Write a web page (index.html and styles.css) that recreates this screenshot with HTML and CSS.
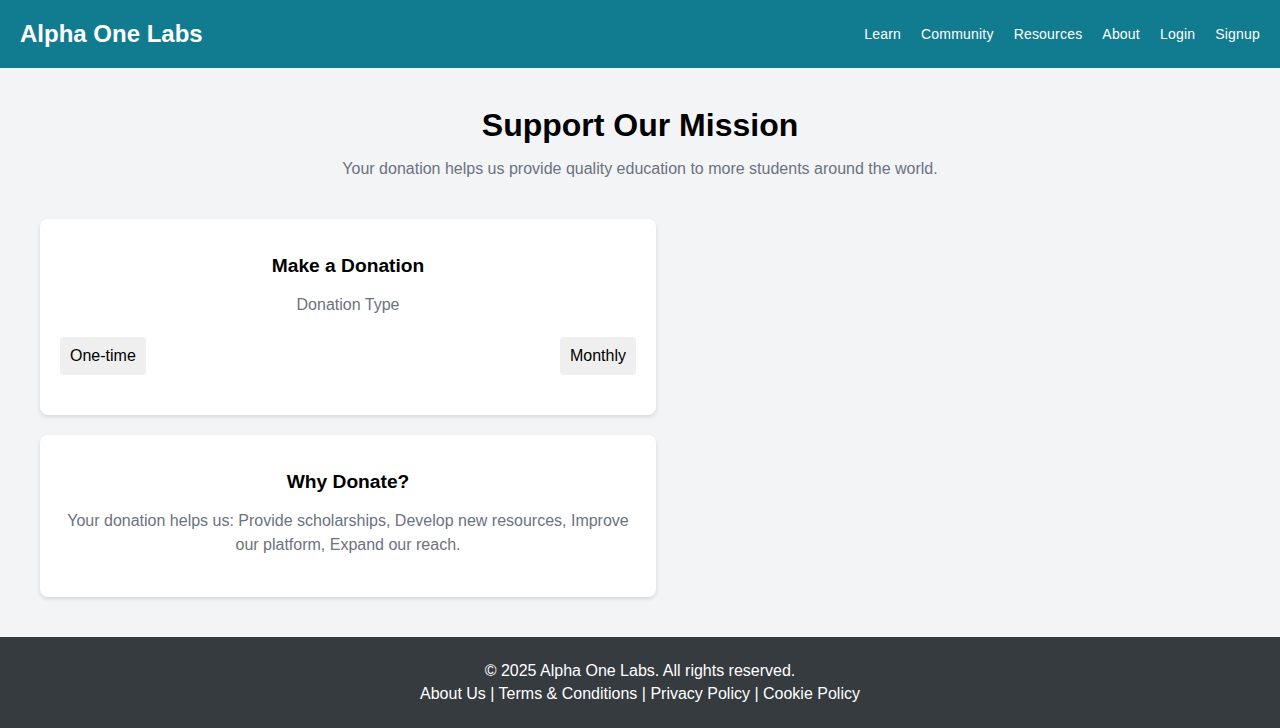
FILE: index.html
```html
<!DOCTYPE html>
<html lang="en">
<head>
<meta charset="utf-8">
<title>Support Our Mission - Alpha One Labs</title>
<link rel="stylesheet" href="styles.css">
</head>
<body>
<header class="site-header">
  <div class="logo">Alpha One Labs</div>
  <nav class="nav">
    <a href="#">Learn</a>
    <a href="#">Community</a>
    <a href="#">Resources</a>
    <a href="#">About</a>
    <a href="#">Login</a>
    <a href="#">Signup</a>
  </nav>
</header>
<main class="main">
  <section class="hero">
    <h1 class="hero-title">Support Our Mission</h1>
    <p class="hero-sub">Your donation helps us provide quality education to more students around the world.</p>
  </section>
  <div class="cards">
    <div class="card">
      <h3 class="card-title">Make a Donation</h3>
      <p class="card-label">Donation Type</p>
      <div class="type-row">
        <button class="type-btn">One-time</button>
        <button class="type-btn">Monthly</button>
      </div>
    </div>
    <div class="card">
      <h3 class="card-title">Why Donate?</h3>
      <p class="card-text">Your donation helps us: Provide scholarships, Develop new resources, Improve our platform, Expand our reach.</p>
    </div>
  </div>
</main>
<footer class="site-footer">
  <p class="footer-line">© 2025 Alpha One Labs. All rights reserved.</p>
  <p class="footer-line">About Us | Terms &amp; Conditions | Privacy Policy | Cookie Policy</p>
</footer>
</body>
</html>
```

FILE: styles.css
```css
* { box-sizing: border-box; }
html, body { margin: 0; padding: 0; }
body {
  font-family: "Liberation Sans", Arial, sans-serif;
  background: #f3f4f6;
  color: #000;
  font-size: 16px;
}
.site-header {
  height: 68px;
  background: #117c8f;
  display: flex;
  align-items: center;
  justify-content: space-between;
  padding: 0 20px;
}
.logo {
  color: #fff;
  font-weight: bold;
  font-size: 24px;
}
.nav {
  display: flex;
  gap: 20px;
}
.nav a {
  color: #fff;
  text-decoration: none;
  font-size: 14px;
  letter-spacing: 0.2px;
}
.main {
  padding: 40px;
}
.hero {
  text-align: center;
  margin-bottom: 38px;
}
.hero-title {
  margin: 0 0 14px;
  font-size: 32px;
  line-height: 1.1;
  font-weight: bold;
}
.hero-sub {
  margin: 0;
  color: #6b7280;
  line-height: 24px;
}
.cards {
  width: 616px;
  display: flex;
  flex-direction: column;
  gap: 20px;
}
.card {
  background: #fff;
  border-radius: 8px;
  box-shadow: 0 2px 4px rgba(0, 0, 0, 0.12);
  padding: 20px;
  text-align: center;
}
.card-title {
  margin: 15px 0 17px;
  font-size: 19.2px;
  line-height: 23px;
  font-weight: bold;
}
.card-label {
  margin: 0 0 21px;
  color: #6b7280;
  line-height: 22px;
}
.type-row {
  display: flex;
  justify-content: space-between;
  margin-bottom: 20px;
}
.type-btn {
  font-family: "Liberation Sans", Arial, sans-serif;
  font-size: 16px;
  line-height: 18px;
  padding: 10px;
  border: none;
  border-radius: 4px;
  background: #efefef;
  color: #000;
}
.card-text {
  margin: -1px 0 20px;
  color: #6b7280;
  line-height: 24px;
}
.site-footer {
  background: #363b40;
  color: #fff;
  text-align: center;
  padding: 22px 0 23px;
}
.footer-line {
  margin: 0;
  line-height: 23px;
}
```
